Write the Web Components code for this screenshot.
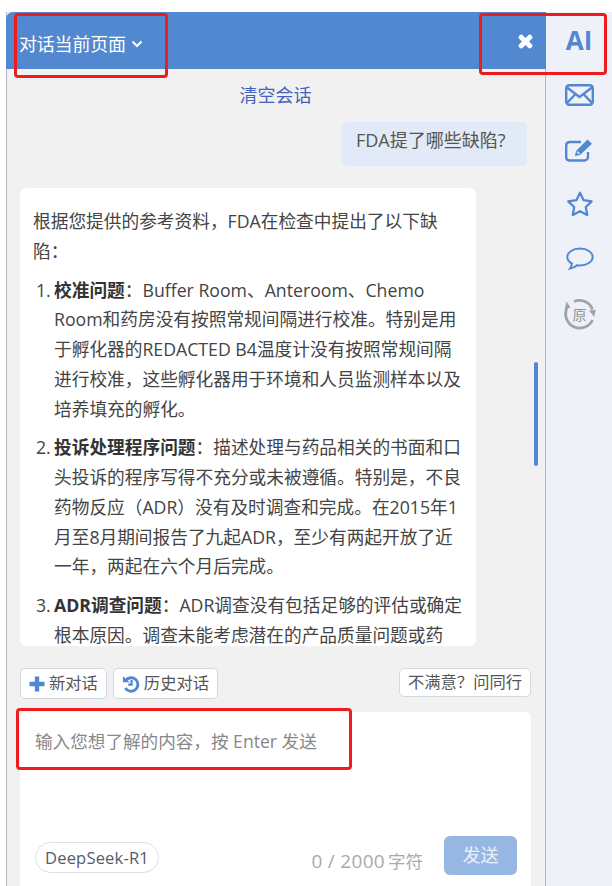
<!DOCTYPE html>
<html lang="zh"><head><meta charset="utf-8"><title>AI</title>
<style>
html,body{margin:0;padding:0;background:#fff;}
body{width:612px;height:886px;overflow:hidden;font-family:"Liberation Sans","Noto Sans CJK SC",sans-serif;}
</style></head><body>
<ai-app></ai-app>
<script>
const def=(name,css,html,init)=>customElements.define(name,class extends HTMLElement{constructor(){super();const r=this.attachShadow({mode:'open'});r.innerHTML='<style>'+css+'</style>'+html;if(init)init(r,this);}});
const FONT='"Open Sans","Noto Sans CJK SC",sans-serif';
def('ai-btn',`:host{display:inline-flex;align-items:center;height:31px;box-sizing:border-box;border:1px solid #d4d7dc;border-radius:5px;background:#fff;padding:0 8px;gap:4px;font:16.3px/1 ${FONT};color:#555;white-space:nowrap}`,'<slot></slot>');
def('ai-msg',`:host{display:block;background:#fff;border-radius:6px;padding:19px 13px 0;width:456px;box-sizing:border-box;height:458px;overflow:hidden;font:17.7px/29.75px ${FONT};color:#444}
p{margin:0 0 9px}ol{margin:0;padding:0;list-style:none}li{position:relative;padding-left:21px;margin-bottom:9px}li i{position:absolute;left:3px;font-style:normal}b{font-weight:700;color:#333}`,`<p>根据您提供的参考资料，FDA在检查中提出了以下缺陷：</p><ol>
<li><i>1.</i><b>校准问题</b>：Buffer Room、Anteroom、Chemo Room和药房没有按照常规间隔进行校准。特别是用于孵化器的REDACTED B4温度计没有按照常规间隔进行校准，这些孵化器用于环境和人员监测样本以及培养填充的孵化。</li>
<li><i>2.</i><b>投诉处理程序问题</b>：描述处理与药品相关的书面和口头投诉的程序写得不充分或未被遵循。特别是，不良药物反应（ADR）没有及时调查和完成。在2015年1月至8月期间报告了九起ADR，至少有两起开放了近一年，两起在六个月后完成。</li>
<li><i>3.</i><b>ADR调查问题</b>：ADR调查没有包括足够的评估或确定根本原因。调查未能考虑潜在的产品质量问题或药</li></ol>`);
def('ai-header',`:host{display:flex;align-items:center;justify-content:space-between;height:57px;background:#5288d0;border-radius:7px 0 0 0;color:#fff;padding:6px 13px 0 13px;box-sizing:border-box;font:18px/1 ${FONT};letter-spacing:-.2px}
.t{display:flex;align-items:center;gap:5px}`,`<div class="t">对话当前页面<svg width="12" height="8" viewBox="0 0 12 8"><path d="M1.500 1.500 6 6l4.500-4.500" fill="none" stroke="#fff" stroke-width="2"/></svg></div>
<svg width="15" height="15" viewBox="0 0 15 15" style="margin-top:-5px"><path d="M3.200 3.200 11.800 11.800M11.800 3.200 3.200 11.800" stroke="#fff" stroke-width="5" stroke-linecap="round"/></svg>`);
def('ai-composer',`:host{display:block;background:#fff;border-radius:6px 6px 0 0;height:174px;box-sizing:border-box;padding:17px 14px 0 15px;position:relative;font-family:${FONT}}
.ph{font-size:17.6px;line-height:24px;color:#888}
.row{display:flex;align-items:center;justify-content:space-between;margin-top:86px}
.chip{border:1px solid #dcdfe4;border-radius:16px;height:31px;box-sizing:border-box;padding:0 9px;display:flex;align-items:center;font-size:16.5px;color:#555b6b;letter-spacing:.2px}
.r{display:flex;align-items:center;gap:21px}
.c{font-size:17.500px;color:#aaa;margin-top:7px;white-space:nowrap}.c span{font-size:19px;letter-spacing:.3px;margin-right:3px}
.s{width:73px;height:39px;border-radius:6px;background:#96b7e4;color:#e9f1fb;font-size:18px;display:flex;align-items:center;justify-content:center;margin-top:-3px;padding-bottom:4px;box-sizing:border-box}`,`<div class="ph">输入您想了解的内容，按 Enter 发送</div><div class="row"><div class="chip">DeepSeek-R1</div><div class="r"><div class="c"><span>0 / 2000</span>字符</div><div class="s">发送</div></div></div>`);
def('ai-sidebar',`:host{display:flex;flex-direction:column;align-items:center;width:66px;background:#eef2f8;box-sizing:border-box;position:relative;color:#5288d0}
.ai{height:57px;width:66px;display:flex;align-items:center;justify-content:center;font:700 26px/1 "Open Sans",sans-serif;padding-bottom:1px;box-sizing:border-box}
.ic{height:55.500px;display:flex;align-items:center;justify-content:center;width:100%;margin-left:1px}
svg{display:block}text{font:14px "Noto Sans CJK SC",sans-serif}`,`<div class="ai">AI</div>
<div class="ic" style="margin-top:-2px"><svg width="29" height="22" viewBox="0 0 29 22" fill="none" stroke="#5288d0" stroke-width="2.400"><rect x="1.200" y="1.200" width="26.600" height="19.600" rx="3"/><path d="M2 3.500 14.500 13 27 3.500M2 19l8.500-9M27 19l-8.500-9"/></svg></div>
<div class="ic" style="margin-top:-1px"><svg width="29" height="25" viewBox="0 0 29 25" fill="none"><path d="M23 15v5a3.500 3.500 0 0 1-3.500 3.500h-15A3.500 3.500 0 0 1 1.200 20V8.500A3.500 3.500 0 0 1 4.500 5H16" stroke="#5288d0" stroke-width="2.400"/><path d="M10 19l1-5L22.500 2.500l4.500 4.300L15 18z" fill="#5288d0"/><path d="M12 14.500l2.500 2.500" stroke="#eef2f8" stroke-width="1.200"/></svg></div>
<div class="ic" style="margin-top:-1px"><svg width="28" height="27" viewBox="0 0 28 27" fill="none"><path d="M14 2.800l3.600 7.400 8.100 1.100-5.900 5.700 1.400 8-7.200-3.800-7.200 3.800 1.400-8-5.900-5.700 8.100-1.100z" stroke="#5288d0" stroke-width="2.300" stroke-linejoin="round"/></svg></div>
<div class="ic"><svg width="28" height="24" viewBox="0 0 28 24" fill="none"><path d="M14 1.500C7 1.500 1.300 5.300 1.300 10c0 2.700 1.800 5 4.700 6.600-.3 2-1.100 3.800-2 5 2.800-.5 5.300-1.800 7-3.400 1 .2 2 .3 3 .3 7 0 12.700-3.800 12.700-8.500S21 1.500 14 1.500z" stroke="#5288d0" stroke-width="2"/></svg></div>
<div class="ic"><svg width="33" height="33" viewBox="0 0 33 33" fill="none"><path d="M11 3.500A14 14 0 0 1 29.500 11.500M29.500 22A14 14 0 0 1 4 10" stroke="#a0a4aa" stroke-width="2.800"/><path d="M26 12.500l6.800-.8-1.600 7.300zM1.500 11.500l6-2-4-6z" fill="#a0a4aa"/><text x="16.500" y="21.500" text-anchor="middle" fill="#8f9296">原</text></svg></div>`);
def('ai-note',`:host{display:block;position:absolute;box-sizing:border-box;border:3px solid #ee1c1c;border-radius:4px;pointer-events:none}`,'');
def('ai-app',`:host{display:block;position:relative;width:612px;height:886px;overflow:hidden;font-family:${FONT};padding-top:12px;box-sizing:border-box}
.shell{display:flex;height:874px;margin-left:6px}
.main{width:540px;background:#f1f1f2;border-left:1px solid #b6b8bb;border-right:1px solid #aeb8c6;box-sizing:border-box;display:flex;flex-direction:column;position:relative;flex:none}
ai-header{margin:0 -1px}
.clear{text-align:center;color:#4462bb;font-size:18px;line-height:24px;margin-top:14px;margin-left:-1px}
.ask{align-self:flex-end;margin:15px 18px 0 0;width:185px;height:44px;background:#e1eaf6;border-radius:5px;color:#555;font-size:18px;line-height:37px;box-sizing:border-box;padding-left:14px;white-space:nowrap}
ai-msg{margin:22px 0 0 13px;flex:none}
.tools{display:flex;align-items:flex-start;margin:22px 14px 0 13px;gap:6px;flex:none}
.tools ai-btn svg{display:block}
.sp{flex:1}
.thumb{position:absolute;left:527px;top:350px;width:4px;height:104px;border-radius:2px;background:#5288d0}
ai-composer{margin:13px 14px 0 13px;flex:none}
ai-btn.mini{height:29px}`,`<div class="shell"><div class="main"><ai-header></ai-header><div class="clear">清空会话</div><div class="ask">FDA提了哪些缺陷?</div><ai-msg></ai-msg>
<div class="tools"><ai-btn><svg width="16" height="16" viewBox="0 0 16 16"><path d="M8 .5v15M.5 8h15" stroke="#5288d0" stroke-width="4.400"/></svg>新对话</ai-btn><ai-btn><svg width="18" height="18" viewBox="0 0 16 16" fill="none"><path d="M3.200 5A6 6 0 1 1 3 11.500" stroke="#5288d0" stroke-width="2.600"/><path d="M.8 1l6 5.500H.8z" fill="#5288d0"/><path d="M8.500 4.500V8.500H5.500" stroke="#5288d0" stroke-width="2"/></svg>历史对话</ai-btn><span class="sp"></span><ai-btn class="mini">不满意？问同行</ai-btn></div>
<ai-composer></ai-composer><div class="thumb"></div></div><ai-sidebar></ai-sidebar></div>
<ai-note style="left:14px;top:13px;width:154px;height:65px"></ai-note>
<ai-note style="left:479px;top:13px;width:128px;height:62px"></ai-note>
<ai-note style="left:16px;top:708px;width:336px;height:62px"></ai-note>`);
</script></body></html>
